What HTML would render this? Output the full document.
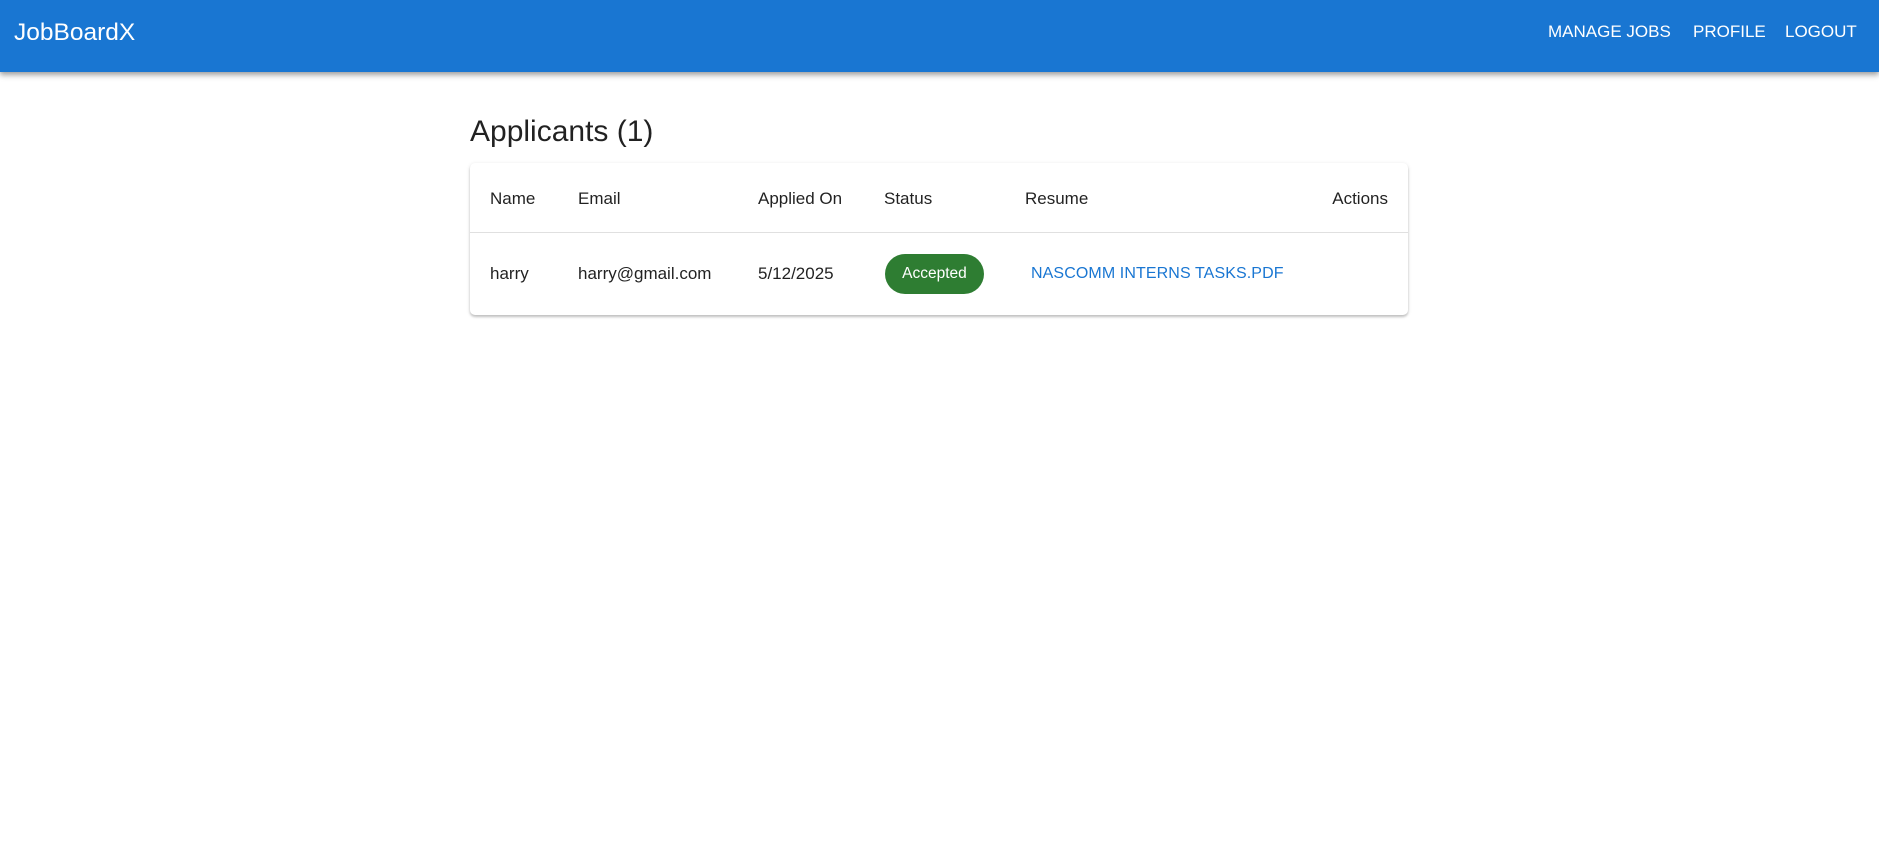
<!DOCTYPE html>
<html><head><meta charset="utf-8"><style>
body{margin:0;width:1879px;height:855px;background:#fff;font-family:"Liberation Sans",sans-serif;color:rgba(0,0,0,.87);overflow:hidden}
.bar{position:absolute;left:0;top:0;width:1879px;height:72px;background:#1976d2;box-shadow:0 2px 5px rgba(0,0,0,.3),0 4px 6px rgba(0,0,0,.14);color:#fff}
.brand{position:absolute;left:14px;top:18px;font-size:24.5px;line-height:30px}
.nav{position:absolute;top:21px;font-size:17px;line-height:22px;text-transform:uppercase}
h1{position:absolute;left:470px;top:114px;margin:0;font-weight:400;font-size:30px;line-height:36px}
.card{position:absolute;left:470px;top:163px;width:938px;height:152px;border-radius:5px;box-shadow:0 2px 2px rgba(0,0,0,.18),0 1px 4px rgba(0,0,0,.12);background:#fff}
.hr{position:absolute;left:0;top:69px;width:938px;height:1px;background:#e0e0e0}
.t{position:absolute;font-size:17px;line-height:20px;white-space:nowrap}
.chip{position:absolute;left:415px;top:91px;width:99px;height:40px;border-radius:20px;background:#2e7d32;color:#fff;font-size:15.5px;line-height:40px;text-align:center}
.link{position:absolute;left:561px;top:101px;color:#1976d2;font-size:16px;letter-spacing:.1px;line-height:20px}
</style></head><body>
<div class="bar"><div class="brand">JobBoardX</div>
<div class="nav" style="left:1548px">Manage Jobs</div>
<div class="nav" style="left:1693px">Profile</div>
<div class="nav" style="left:1785px">Logout</div></div>
<h1>Applicants (1)</h1>
<div class="card">
<div class="t" style="left:20px;top:26px">Name</div>
<div class="t" style="left:108px;top:26px">Email</div>
<div class="t" style="left:288px;top:26px">Applied On</div>
<div class="t" style="left:414px;top:26px">Status</div>
<div class="t" style="left:555px;top:26px">Resume</div>
<div class="t" style="right:20px;top:26px">Actions</div>
<div class="hr"></div>
<div class="t" style="left:20px;top:101px">harry</div>
<div class="t" style="left:108px;top:101px">harry@gmail.com</div>
<div class="t" style="left:288px;top:101px">5/12/2025</div>
<div class="chip">Accepted</div>
<div class="link">NASCOMM INTERNS TASKS.PDF</div>
</div>
</body></html>
